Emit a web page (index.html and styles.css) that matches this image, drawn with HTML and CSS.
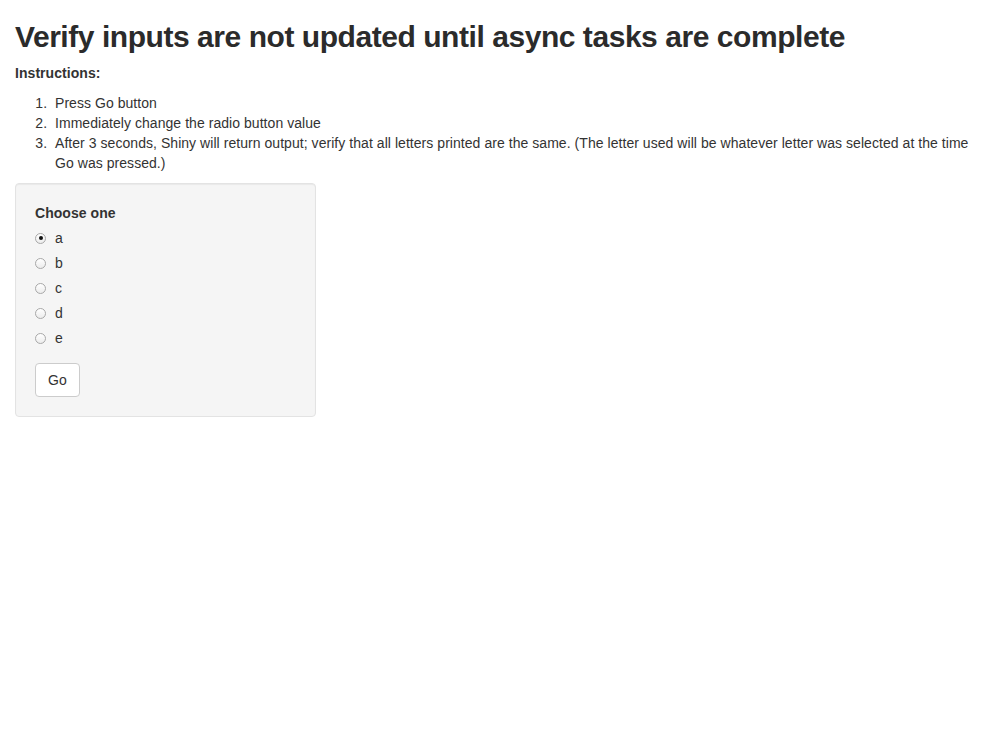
FILE: index.html
```html
<!DOCTYPE html>
<html>
<head>
<meta charset="utf-8">
<title>Async inputs</title>
<link rel="stylesheet" href="styles.css">
</head>
<body>
<div class="container">
  <h2 class="title">Verify inputs are not updated until async tasks are complete</h2>
  <p class="intro"><b>Instructions:</b></p>
  <ol class="steps">
    <li>Press Go button</li>
    <li>Immediately change the radio button value</li>
    <li>After 3 seconds, Shiny will return output; verify that all letters printed are the same. (The letter used will be whatever letter was selected at the time Go was pressed.)</li>
  </ol>
  <div class="well">
    <div class="form-group">
      <label class="control-label">Choose one</label>
      <div class="options">
        <label class="radio"><input type="radio" name="letter" value="a" checked><span>a</span></label>
        <label class="radio"><input type="radio" name="letter" value="b"><span>b</span></label>
        <label class="radio"><input type="radio" name="letter" value="c"><span>c</span></label>
        <label class="radio"><input type="radio" name="letter" value="d"><span>d</span></label>
        <label class="radio"><input type="radio" name="letter" value="e"><span>e</span></label>
      </div>
    </div>
    <button class="btn" type="button">Go</button>
  </div>
</div>
</body>
</html>
```

FILE: styles.css
```css
html, body {
  margin: 0;
  padding: 0;
  background: #fff;
}
body {
  font-family: "Liberation Sans", Arial, Helvetica, sans-serif;
  font-size: 14px;
  line-height: 20px;
  color: #333;
  letter-spacing: 0.05px;
}
.container {
  padding: 0 15px;
}
.title {
  font-size: 30px;
  font-weight: bold;
  line-height: 33px;
  margin: 20px 0 10px;
  letter-spacing: -0.45px;
  color: #2b2b2b;
}
.intro {
  margin: 0 0 10px;
}
.intro b {
  font-weight: bold;
}
.steps {
  margin: 0 0 10px;
  padding-left: 40px;
}
.steps li::marker {
  content: counter(list-item) ".\00a0\00a0 ";
}
.well {
  width: 301px;
  box-sizing: border-box;
  background: #f5f5f5;
  border: 1px solid #e3e3e3;
  border-radius: 4px;
  padding: 19px;
  box-shadow: inset 0 1px 1px rgba(0,0,0,0.05);
}
.form-group {
  margin-bottom: 15px;
}
.control-label {
  display: block;
  font-weight: bold;
  margin-bottom: 5px;
}
.options {
  display: flex;
  flex-direction: column;
  gap: 5px;
  margin-bottom: 10px;
}
.radio {
  display: flex;
  align-items: center;
  height: 20px;
  cursor: pointer;
}
.radio input {
  -webkit-appearance: none;
  appearance: none;
  width: 11px;
  height: 11px;
  margin: 0 9px 0 0;
  border: 1px solid #a8a8a8;
  border-radius: 50%;
  background: linear-gradient(#ffffff, #ececec);
  box-sizing: border-box;
  display: grid;
  place-items: center;
}
.radio input:checked::after {
  content: "";
  width: 4px;
  height: 4px;
  border-radius: 50%;
  background: #111;
}
.btn {
  font-family: inherit;
  font-size: 14px;
  line-height: 20px;
  color: #333;
  background: #fff;
  border: 1px solid #ccc;
  border-radius: 4px;
  padding: 6px 12px;
  cursor: pointer;
  display: block;
}
```
